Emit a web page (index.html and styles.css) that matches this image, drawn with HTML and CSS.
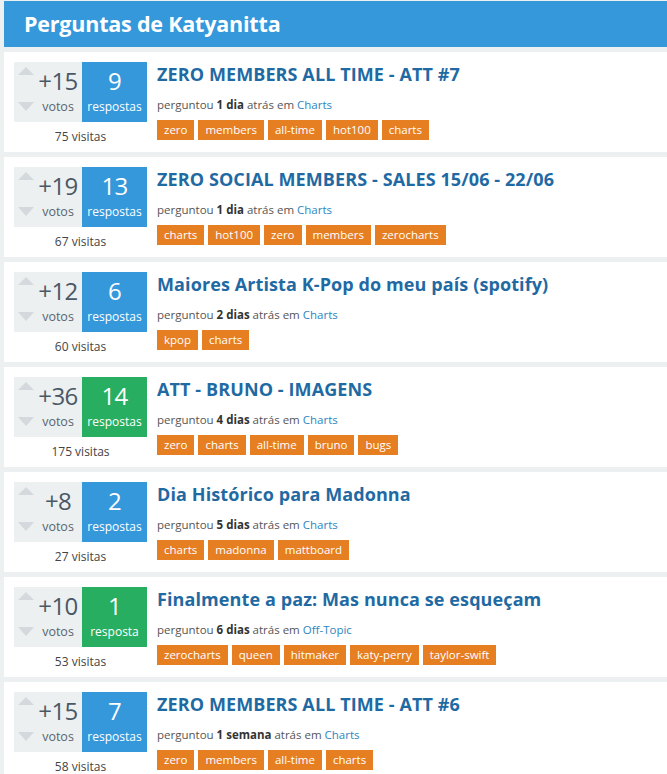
FILE: index.html
```html
<!DOCTYPE html>
<html lang="pt">
<head>
<meta charset="utf-8">
<title>Perguntas de Katyanitta</title>
<link rel="stylesheet" href="styles.css">
</head>
<body>
<div class="page">
  <h1 class="header">Perguntas de Katyanitta</h1>

  <div class="q">
    <div class="stats">
      <div class="boxes">
        <div class="votes"><div class="arrows"><span class="up"></span><span class="down"></span></div><div class="count"><span class="num">+15</span><span class="lbl">votos</span></div></div>
        <div class="answers"><span class="num">9</span><span class="lbl">respostas</span></div>
      </div>
      <div class="visits">75 visitas</div>
    </div>
    <div class="main">
      <a class="title">ZERO MEMBERS ALL TIME - ATT #7</a>
      <div class="meta">perguntou <b>1 dia</b> atrás em <a class="cat">Charts</a></div>
      <div class="tags"><span class="tag">zero</span><span class="tag">members</span><span class="tag">all-time</span><span class="tag">hot100</span><span class="tag">charts</span></div>
    </div>
  </div>

  <div class="q">
    <div class="stats">
      <div class="boxes">
        <div class="votes"><div class="arrows"><span class="up"></span><span class="down"></span></div><div class="count"><span class="num">+19</span><span class="lbl">votos</span></div></div>
        <div class="answers"><span class="num">13</span><span class="lbl">respostas</span></div>
      </div>
      <div class="visits">67 visitas</div>
    </div>
    <div class="main">
      <a class="title">ZERO SOCIAL MEMBERS - SALES 15/06 - 22/06</a>
      <div class="meta">perguntou <b>1 dia</b> atrás em <a class="cat">Charts</a></div>
      <div class="tags"><span class="tag">charts</span><span class="tag">hot100</span><span class="tag">zero</span><span class="tag">members</span><span class="tag">zerocharts</span></div>
    </div>
  </div>

  <div class="q">
    <div class="stats">
      <div class="boxes">
        <div class="votes"><div class="arrows"><span class="up"></span><span class="down"></span></div><div class="count"><span class="num">+12</span><span class="lbl">votos</span></div></div>
        <div class="answers"><span class="num">6</span><span class="lbl">respostas</span></div>
      </div>
      <div class="visits">60 visitas</div>
    </div>
    <div class="main">
      <a class="title">Maiores Artista K-Pop do meu país (spotify)</a>
      <div class="meta">perguntou <b>2 dias</b> atrás em <a class="cat">Charts</a></div>
      <div class="tags"><span class="tag">kpop</span><span class="tag">charts</span></div>
    </div>
  </div>

  <div class="q">
    <div class="stats">
      <div class="boxes">
        <div class="votes"><div class="arrows"><span class="up"></span><span class="down"></span></div><div class="count"><span class="num">+36</span><span class="lbl">votos</span></div></div>
        <div class="answers accepted"><span class="num">14</span><span class="lbl">respostas</span></div>
      </div>
      <div class="visits">175 visitas</div>
    </div>
    <div class="main">
      <a class="title">ATT - BRUNO - IMAGENS</a>
      <div class="meta">perguntou <b>4 dias</b> atrás em <a class="cat">Charts</a></div>
      <div class="tags"><span class="tag">zero</span><span class="tag">charts</span><span class="tag">all-time</span><span class="tag">bruno</span><span class="tag">bugs</span></div>
    </div>
  </div>

  <div class="q">
    <div class="stats">
      <div class="boxes">
        <div class="votes"><div class="arrows"><span class="up"></span><span class="down"></span></div><div class="count"><span class="num">+8</span><span class="lbl">votos</span></div></div>
        <div class="answers"><span class="num">2</span><span class="lbl">respostas</span></div>
      </div>
      <div class="visits">27 visitas</div>
    </div>
    <div class="main">
      <a class="title">Dia Histórico para Madonna</a>
      <div class="meta">perguntou <b>5 dias</b> atrás em <a class="cat">Charts</a></div>
      <div class="tags"><span class="tag">charts</span><span class="tag">madonna</span><span class="tag">mattboard</span></div>
    </div>
  </div>

  <div class="q">
    <div class="stats">
      <div class="boxes">
        <div class="votes"><div class="arrows"><span class="up"></span><span class="down"></span></div><div class="count"><span class="num">+10</span><span class="lbl">votos</span></div></div>
        <div class="answers accepted"><span class="num">1</span><span class="lbl">resposta</span></div>
      </div>
      <div class="visits">53 visitas</div>
    </div>
    <div class="main">
      <a class="title">Finalmente a paz: Mas nunca se esqueçam</a>
      <div class="meta">perguntou <b>6 dias</b> atrás em <a class="cat">Off-Topic</a></div>
      <div class="tags"><span class="tag">zerocharts</span><span class="tag">queen</span><span class="tag">hitmaker</span><span class="tag">katy-perry</span><span class="tag">taylor-swift</span></div>
    </div>
  </div>

  <div class="q">
    <div class="stats">
      <div class="boxes">
        <div class="votes"><div class="arrows"><span class="up"></span><span class="down"></span></div><div class="count"><span class="num">+15</span><span class="lbl">votos</span></div></div>
        <div class="answers"><span class="num">7</span><span class="lbl">respostas</span></div>
      </div>
      <div class="visits">58 visitas</div>
    </div>
    <div class="main">
      <a class="title">ZERO MEMBERS ALL TIME - ATT #6</a>
      <div class="meta">perguntou <b>1 semana</b> atrás em <a class="cat">Charts</a></div>
      <div class="tags"><span class="tag">zero</span><span class="tag">members</span><span class="tag">all-time</span><span class="tag">charts</span></div>
    </div>
  </div>
</div>
</body>
</html>
```

FILE: styles.css
```css
html, body {
  margin: 0;
  padding: 0;
  background: #ecf0f1;
}
body {
  font-family: "Open Sans", "Noto Sans", "DejaVu Sans", sans-serif;
  color: #444;
  overflow: hidden;
}
.page {
  padding: 1px 0 0 4px;
}
.header {
  margin: 0 0 5px 0;
  height: 46px;
  box-sizing: border-box;
  padding: 0 0 0 20px;
  background: #3498db;
  color: #fff;
  font-size: 21.5px;
  font-weight: 700;
  line-height: 46px;
  letter-spacing: -0.2px;
}
.q {
  display: flex;
  background: #fff;
  height: 100px;
  box-sizing: border-box;
  padding: 10px 10px 0 10px;
  margin-bottom: 5px;
}
.stats {
  width: 133px;
  flex: none;
}
.boxes {
  display: flex;
  height: 60px;
}
.votes {
  width: 68px;
  display: flex;
  background: #ecf0f1;
  color: #4a5866;
}
.arrows {
  width: 20px;
  display: flex;
  flex-direction: column;
  justify-content: space-between;
  padding: 5px 0 11px 4px;
  box-sizing: border-box;
}
.up, .down {
  display: block;
  width: 0;
  height: 0;
  border-left: 8px solid transparent;
  border-right: 8px solid transparent;
}
.up { border-bottom: 8px solid #d3d9dc; }
.down { border-top: 9px solid #d3d9dc; }
.count, .answers {
  display: flex;
  flex-direction: column;
  align-items: center;
  padding-top: 4px;
  box-sizing: border-box;
}
.count {
  flex: 1;
}
.num {
  font-size: 24px;
  line-height: 30px;
  letter-spacing: -0.6px;
}
.lbl {
  font-size: 12px;
  line-height: 16px;
  margin-top: 3px;
}
.count .lbl {
  font-size: 12.5px;
  color: #5a6670;
}
.answers {
  width: 65px;
  background: #3498db;
  color: #fff;
}
.answers.accepted {
  background: #27ae60;
}
.visits {
  text-align: center;
  font-size: 12px;
  line-height: 18px;
  margin-top: 6px;
  color: #444;
}
.main {
  margin-left: 10px;
  min-width: 0;
}
.title {
  display: block;
  color: #1f6aa3;
  font-size: 18px;
  font-weight: 700;
  line-height: 24px;
  white-space: nowrap;
  letter-spacing: 0.1px;
}
.meta {
  margin-top: 10px;
  font-size: 11.5px;
  line-height: 18px;
  color: #555;
  white-space: nowrap;
}
.meta b {
  color: #333;
}
.cat {
  color: #2e86c1;
}
.tags {
  display: flex;
  gap: 4px;
  margin-top: 6px;
}
.tag {
  background: #e67e22;
  color: #fff;
  font-size: 11.5px;
  line-height: 20px;
  height: 20px;
  padding: 0 7px;
  white-space: nowrap;
}
```
